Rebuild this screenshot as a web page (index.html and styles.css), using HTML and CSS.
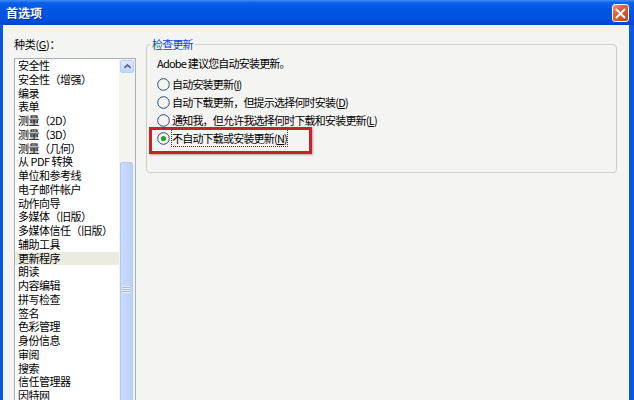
FILE: index.html
```html
<!DOCTYPE html>
<html lang="zh-CN">
<head>
    <meta charset="UTF-8">
    <title>首选项</title>
    <link rel="stylesheet" href="styles.css">
</head>
<body>
    <div class="window">
        <div class="titlebar">
            <span class="title">首选项</span>
            <div class="close">
                <svg width="11" height="11" viewBox="0 0 11 11"><path d="M1.5 1.5 L9.5 9.5 M9.5 1.5 L1.5 9.5" stroke="#fff" stroke-width="2" stroke-linecap="round"/></svg>
            </div>
        </div>
        <div class="frame">
            <div class="sidebar">
                <div class="label">种类(<u>G</u>)：</div>
                <div class="listbox">
                    <ul class="items">
                        <li>安全性</li>
                        <li>安全性（增强）</li>
                        <li>编录</li>
                        <li>表单</li>
                        <li>测量（2D）</li>
                        <li>测量（3D）</li>
                        <li>测量（几何）</li>
                        <li>从 PDF 转换</li>
                        <li>单位和参考线</li>
                        <li>电子邮件帐户</li>
                        <li>动作向导</li>
                        <li>多媒体（旧版）</li>
                        <li>多媒体信任（旧版）</li>
                        <li>辅助工具</li>
                        <li class="selected">更新程序</li>
                        <li>朗读</li>
                        <li>内容编辑</li>
                        <li>拼写检查</li>
                        <li>签名</li>
                        <li>色彩管理</li>
                        <li>身份信息</li>
                        <li>审阅</li>
                        <li>搜索</li>
                        <li>信任管理器</li>
                        <li>因特网</li>
                    </ul>
                    <div class="scrollbar">
                        <div class="sb-btn">
                            <svg width="7" height="5" viewBox="0 0 7 5"><path d="M0.5 4 L3.5 1 L6.5 4" fill="none" stroke="#4d6185" stroke-width="1.6"/></svg>
                        </div>
                        <div class="sb-thumb">
                            <div class="grip"></div>
                        </div>
                    </div>
                </div>
            </div>
            <div class="main">
                <fieldset class="group">
                    <legend>检查更新</legend>
                    <div class="note">Adobe 建议您自动安装更新。</div>
                    <div class="option">
                        <svg class="radio" width="13" height="13" viewBox="0 0 13 13"><circle cx="6.5" cy="6.5" r="5.8" fill="#f4f4f0" stroke="#1c5180"/></svg>
                        <span>自动安装更新(<u>I</u>)</span>
                    </div>
                    <div class="option">
                        <svg class="radio" width="13" height="13" viewBox="0 0 13 13"><circle cx="6.5" cy="6.5" r="5.8" fill="#f4f4f0" stroke="#1c5180"/></svg>
                        <span>自动下载更新，但提示选择何时安装(<u>D</u>)</span>
                    </div>
                    <div class="option">
                        <svg class="radio" width="13" height="13" viewBox="0 0 13 13"><circle cx="6.5" cy="6.5" r="5.8" fill="#f4f4f0" stroke="#1c5180"/></svg>
                        <span>通知我，但允许我选择何时下载和安装更新(<u>L</u>)</span>
                    </div>
                    <div class="option marked">
                        <svg class="radio" width="13" height="13" viewBox="0 0 13 13"><circle cx="6.5" cy="6.5" r="5.8" fill="#f4f4f0" stroke="#1c5180"/><circle cx="6.5" cy="6.5" r="2.6" fill="#2ba02b"/></svg>
                        <span class="focus">不自动下载或安装更新(<u>N</u>)</span>
                        <div class="callout"></div>
                    </div>
                </fieldset>
            </div>
        </div>
    </div>
</body>
</html>
```

FILE: styles.css
```css
body {
    margin: 0;
    font-family: "Noto Sans CJK SC", "Liberation Sans", sans-serif;
    font-size: 11px;
    color: #000;
}

.window {
    width: 634px;
    height: 400px;
    overflow: hidden;
    display: flex;
    flex-direction: column;
    background: #0054e3;
}

.titlebar {
    height: 25px;
    flex-shrink: 0;
    display: flex;
    align-items: center;
    justify-content: space-between;
    padding: 0 5px 0 6px;
    background: linear-gradient(#3d8ef6 0, #0a5fe8 3px, #0056e4 10px, #0052df 19px, #0043c5 25px);
}

.title {
    color: #fff;
    font-weight: bold;
    font-size: 12px;
    letter-spacing: 0;
    text-shadow: 1px 1px #0b2a8c;
}

.close {
    width: 17px;
    height: 18px;
    box-sizing: border-box;
    border: 1px solid #fff;
    border-radius: 3px;
    background: linear-gradient(135deg, #f09a7c 0, #e0623c 35%, #c9411b 100%);
    display: flex;
    align-items: center;
    justify-content: center;
    margin-top: 1px;
}

.frame {
    flex: 1;
    display: flex;
    border-left: 3px solid #0a58e0;
    border-right: 5px solid #0a58e0;
    background: #f4f4f2;
}

.sidebar {
    width: 143px;
    flex-shrink: 0;
    box-sizing: border-box;
    padding: 12px 0 0 11px;
}

.label {
    line-height: 14px;
    margin-bottom: 7px;
    letter-spacing: -0.3px;
}

.listbox {
    width: 122px;
    height: 360px;
    box-sizing: border-box;
    border: 1px solid #a9b0b8;
    background: #fff;
    display: flex;
}

.items {
    flex: 1;
    list-style: none;
    margin: 0;
    padding: 0;
}

.items li {
    height: 13.75px;
    line-height: 13.75px;
    padding-left: 3px;
    letter-spacing: -0.5px;
    white-space: nowrap;
}

.items li.selected {
    background: #ecebdf;
}

.scrollbar {
    width: 16px;
    flex-shrink: 0;
    background: #f3f3ef;
    display: flex;
    flex-direction: column;
    align-items: flex-start;
    padding-left: 1px;
    box-sizing: border-box;
}

.sb-btn {
    width: 14px;
    height: 14px;
    margin-top: 1px;
    box-sizing: border-box;
    border: 1px solid #b8cdf6;
    border-radius: 2px;
    background: linear-gradient(#dfe9fe, #c3d4fc);
    display: flex;
    align-items: center;
    justify-content: center;
}

.sb-thumb {
    width: 13px;
    height: 275px;
    margin-top: 89px;
    box-sizing: border-box;
    border: 1px solid #b3c9f5;
    border-radius: 2px;
    background: linear-gradient(90deg, #c9dafd, #bcd0fb);
    display: flex;
    align-items: center;
    justify-content: center;
}

.grip {
    width: 7px;
    height: 7px;
    background: repeating-linear-gradient(#eef3ff 0, #eef3ff 1px, #9fb6e8 1px, #9fb6e8 2px);
}

.main {
    flex: 1;
    padding: 12px 12px 0 0;
}

.group {
    margin: 0;
    border: 1px solid #d0d0bf;
    border-radius: 4px;
    padding: 5px 10px 25px 10px;
    letter-spacing: -0.8px;
}

.group legend {
    color: #0046d5;
    line-height: 14px;
    padding: 0 2px;
    margin-left: -7px;
}

.note {
    line-height: 14px;
    margin-bottom: 5px;
}

.option {
    height: 18px;
    display: flex;
    align-items: center;
    gap: 2px;
    white-space: nowrap;
}

.option.marked {
    position: relative;
}

.focus {
    outline: 1px dotted #333;
    outline-offset: 0;
}

.callout {
    position: absolute;
    left: -8px;
    top: -2px;
    width: 163px;
    height: 27px;
    box-sizing: border-box;
    border: 3px solid #c2242b;
    box-shadow: 1px 1px 2px rgba(90, 0, 0, 0.35);
}
```
